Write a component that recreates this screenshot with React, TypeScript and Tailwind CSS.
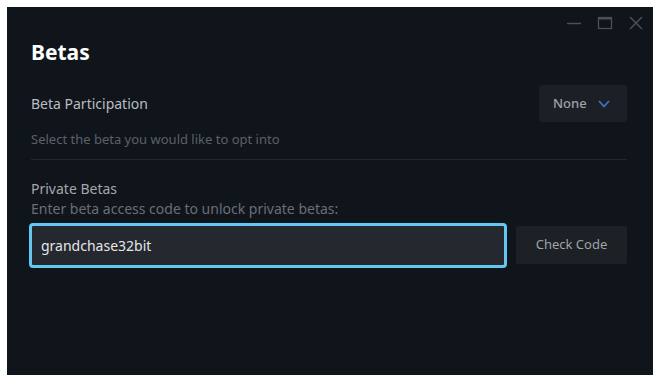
import { useState } from "react";

const font = { fontFamily: '"Noto Sans", "Open Sans", Arial, sans-serif' };

const WindowControls = () => (
  <div className="flex justify-end items-center gap-[15px] h-[30px] pr-[9px] pt-[2px]">
    {/* minimise */}
    <svg width="16" height="16" viewBox="0 0 16 16" className="text-[#4b4f56]">
      <line x1="1" y1="8.5" x2="15" y2="8.5" stroke="currentColor" strokeWidth="1.5" />
    </svg>
    {/* maximise */}
    <svg width="16" height="16" viewBox="0 0 16 16" className="text-[#4b4f56]">
      <rect x="1.5" y="2.5" width="13" height="11" fill="none" stroke="currentColor" strokeWidth="1.3" />
      <line x1="1.5" y1="3.5" x2="14.5" y2="3.5" stroke="currentColor" strokeWidth="2" />
    </svg>
    {/* close */}
    <svg width="16" height="16" viewBox="0 0 16 16" className="text-[#4b4f56]">
      <path d="M2 2 L14 14 M14 2 L2 14" stroke="currentColor" strokeWidth="1.5" />
    </svg>
  </div>
);

export default function App() {
  const [code, setCode] = useState("grandchase32bit");

  return (
    <div className="w-[661px] h-[383px] bg-white pt-[7px] pl-[7px] pr-[8px] pb-[8px]" style={font}>
      <div className="h-full bg-[#10141b] flex flex-col">
        <WindowControls />

        <div className="pl-[24px] pr-[26px]">
          <h1 className="text-[21px] font-bold text-white leading-[26px] mt-[2px]">Betas</h1>

          {/* Beta participation */}
          <div className="flex items-center justify-between mt-[20px]">
            <span className="text-[14px] text-[#b9bdc2]">Beta Participation</span>
            <button className="flex items-center gap-[11px] h-[37px] w-[88px] pl-[14px] bg-[#1c1f25] rounded-[3px]">
              <span className="text-[13px] font-medium text-[#9ea2a7]">None</span>
              <svg width="12" height="8" viewBox="0 0 12 8">
                <path d="M1 1 L6 6.5 L11 1" fill="none" stroke="#3b76c9" strokeWidth="1.7" />
              </svg>
            </button>
          </div>
          <p className="text-[13px] text-[#5c6168] mt-[8px]">Select the beta you would like to opt into</p>
          <div className="h-px bg-[#22262d] mt-[9px]" />

          {/* Private betas */}
          <p className="text-[14px] text-[#a4a8ad] mt-[19px] leading-[20px]">Private Betas</p>
          <p className="text-[14px] text-[#6a6f76] leading-[19px]">Enter beta access code to unlock private betas:</p>

          <div className="flex items-center gap-[9px] mt-[5px]">
            <input
              value={code}
              onChange={(e) => setCode(e.target.value)}
              className="w-[478px] h-[45px] -ml-[2px] px-[9px] bg-[#25282e] border-[3px] border-[#62c7f2] rounded-[4px] text-[14px] text-[#e4e6e9] outline-none"
            />
            <button className="flex-1 h-[38px] bg-[#1d2025] rounded-[2px] text-[13px] text-[#9fa3a8]">
              Check Code
            </button>
          </div>
        </div>
      </div>
    </div>
  );
}
